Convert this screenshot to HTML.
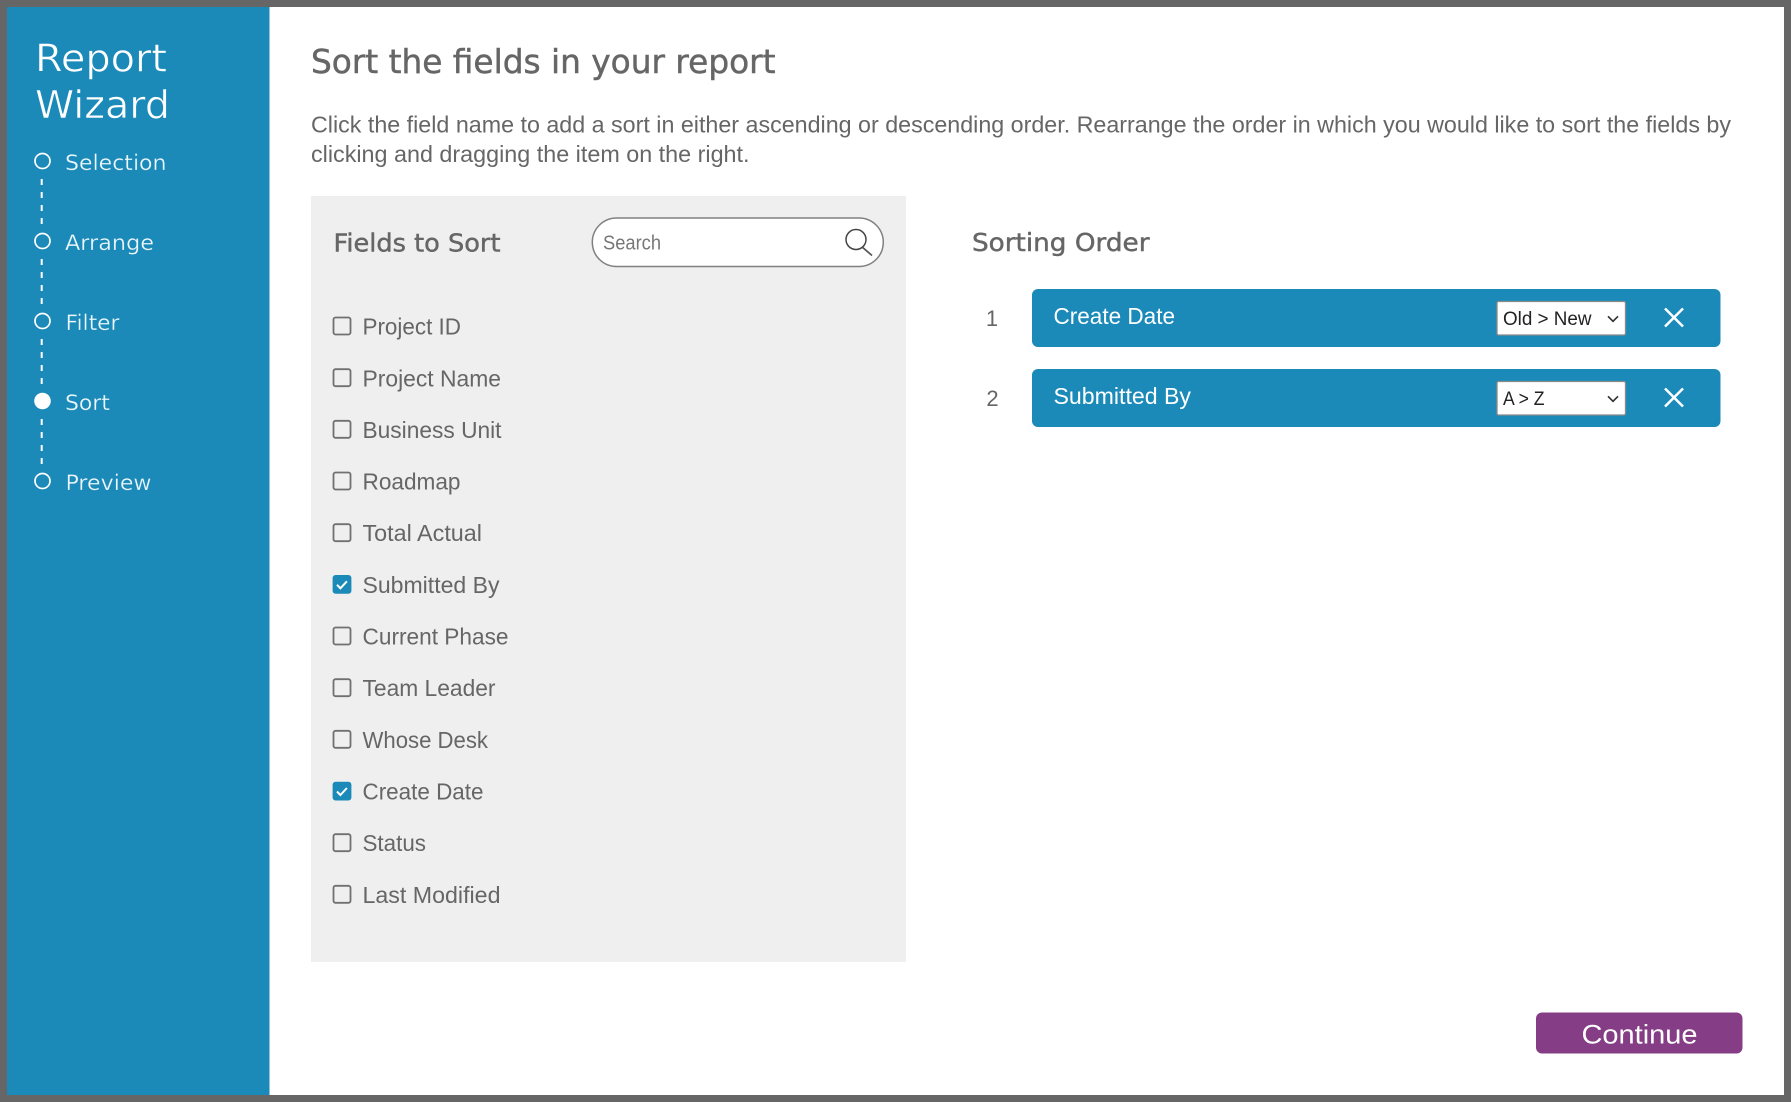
<!DOCTYPE html>
<html lang="en">
<head>
<meta charset="utf-8">
<title>Report Wizard</title>
<style>
html,body{margin:0;padding:0;background:#666;width:1791px;height:1102px;overflow:hidden}
svg{display:block;filter:blur(.35px)}
text{font-family:"Liberation Sans",sans-serif;fill:#666}
.m{font-family:"DejaVu Sans",sans-serif}
.h{stroke:#666;stroke-width:.45px}
.t{stroke:#1b8ab9;stroke-width:.6px}
.w{fill:#fff}
.nav{font-family:"DejaVu Sans",sans-serif;fill:#eef8fc;font-size:21px;stroke:#1b8ab9;stroke-width:.3px}
.f{font-size:23px}
</style>
</head>
<body>
<svg width="1791" height="1102" viewBox="0 0 1791 1102" xmlns="http://www.w3.org/2000/svg">
  <rect x="-5" y="-5" width="1801" height="1112" fill="#666"/>
  <rect x="7" y="7" width="1777" height="1088" fill="#fff"/>
  <rect x="7" y="7" width="262.500" height="1088" fill="#1b8ab9"/>

  <text class="m w t" x="35" y="71.500" font-size="38" textLength="132" lengthAdjust="spacingAndGlyphs">Report</text>
  <text class="m w t" x="35" y="118" font-size="38" textLength="135" lengthAdjust="spacingAndGlyphs">Wizard</text>

  <g fill="none" stroke="#fff" stroke-width="1.700">
    <circle cx="42.500" cy="161" r="7.500"/>
    <circle cx="42.500" cy="241" r="7.500"/>
    <circle cx="42.500" cy="321" r="7.500"/>
    <circle cx="42.500" cy="481" r="7.500"/>
  </g>
  <circle cx="42.500" cy="401" r="8.300" fill="#fff"/>
  <g stroke="#fff" stroke-width="2" stroke-dasharray="6 7">
    <line x1="41.700" y1="179" x2="41.700" y2="226"/>
    <line x1="41.700" y1="259" x2="41.700" y2="306"/>
    <line x1="41.700" y1="339" x2="41.700" y2="386"/>
    <line x1="41.700" y1="419" x2="41.700" y2="466"/>
  </g>
  <text class="nav" x="65" y="170" textLength="101.500" lengthAdjust="spacingAndGlyphs">Selection</text>
  <text class="nav" x="65" y="250" textLength="89" lengthAdjust="spacingAndGlyphs">Arrange</text>
  <text class="nav" x="65.500" y="330" textLength="54" lengthAdjust="spacingAndGlyphs">Filter</text>
  <text class="nav" x="65" y="410" textLength="45" lengthAdjust="spacingAndGlyphs">Sort</text>
  <text class="nav" x="65.500" y="490" textLength="86" lengthAdjust="spacingAndGlyphs">Preview</text>

  <text class="m h" x="311" y="73" font-size="32.500" textLength="464.500" lengthAdjust="spacingAndGlyphs">Sort the fields in your report</text>
  <text x="311" y="132.500" font-size="23" textLength="1420" lengthAdjust="spacingAndGlyphs">Click the field name to add a sort in either ascending or descending order. Rearrange the order in which you would like to sort the fields by</text>
  <text x="311" y="162" font-size="23" textLength="438.500" lengthAdjust="spacingAndGlyphs">clicking and dragging the item on the right.</text>

  <rect x="311" y="196" width="595" height="766" fill="#efefef"/>
  <text class="m h" x="333.500" y="251.500" font-size="25" textLength="167" lengthAdjust="spacingAndGlyphs">Fields to Sort</text>

  <rect x="592.300" y="218" width="291" height="48.500" rx="24.250" fill="#fff" stroke="#808080" stroke-width="1.500"/>
  <text x="603" y="249.300" font-size="20" style="fill:#777" textLength="58" lengthAdjust="spacingAndGlyphs">Search</text>
  <circle cx="856" cy="239.500" r="10" fill="none" stroke="#444" stroke-width="1.500"/>
  <line x1="862.500" y1="247.300" x2="872" y2="255.500" stroke="#555" stroke-width="1.700"/>

  <g fill="none" stroke="#707070" stroke-width="1.800">
    <rect x="333.500" y="317.500" width="17" height="17" rx="2"/>
    <rect x="333.500" y="369.200" width="17" height="17" rx="2"/>
    <rect x="333.500" y="420.800" width="17" height="17" rx="2"/>
    <rect x="333.500" y="472.500" width="17" height="17" rx="2"/>
    <rect x="333.500" y="524.200" width="17" height="17" rx="2"/>
    <rect x="333.500" y="627.500" width="17" height="17" rx="2"/>
    <rect x="333.500" y="679.200" width="17" height="17" rx="2"/>
    <rect x="333.500" y="730.800" width="17" height="17" rx="2"/>
    <rect x="333.500" y="834.200" width="17" height="17" rx="2"/>
    <rect x="333.500" y="885.800" width="17" height="17" rx="2"/>
  </g>
  <rect x="332.600" y="575" width="18.800" height="18.800" rx="3" fill="#1b8ab9"/>
  <path d="M337 584.800l3.400 3.500 6.500-7" fill="none" stroke="#fff" stroke-width="2"/>
  <rect x="332.600" y="781.700" width="18.800" height="18.800" rx="3" fill="#1b8ab9"/>
  <path d="M337 791.500l3.400 3.500 6.500-7" fill="none" stroke="#fff" stroke-width="2"/>

  <g>
    <text class="f" x="362.500" y="334.700" textLength="98.500" lengthAdjust="spacingAndGlyphs">Project ID</text>
    <text class="f" x="362.500" y="386.300" textLength="138.500" lengthAdjust="spacingAndGlyphs">Project Name</text>
    <text class="f" x="362.500" y="437.800" textLength="139" lengthAdjust="spacingAndGlyphs">Business Unit</text>
    <text class="f" x="362.500" y="489.500" textLength="98" lengthAdjust="spacingAndGlyphs">Roadmap</text>
    <text class="f" x="362.500" y="541.200" textLength="119.500" lengthAdjust="spacingAndGlyphs">Total Actual</text>
    <text class="f" x="362.500" y="592.800" textLength="137" lengthAdjust="spacingAndGlyphs">Submitted By</text>
    <text class="f" x="362.500" y="644.500" textLength="146" lengthAdjust="spacingAndGlyphs">Current Phase</text>
    <text class="f" x="362.500" y="696.200" textLength="133" lengthAdjust="spacingAndGlyphs">Team Leader</text>
    <text class="f" x="362.500" y="747.800" textLength="125.500" lengthAdjust="spacingAndGlyphs">Whose Desk</text>
    <text class="f" x="362.500" y="799.500" textLength="121" lengthAdjust="spacingAndGlyphs">Create Date</text>
    <text class="f" x="362.500" y="851.200" textLength="63.500" lengthAdjust="spacingAndGlyphs">Status</text>
    <text class="f" x="362.500" y="902.800" textLength="138" lengthAdjust="spacingAndGlyphs">Last Modified</text>
  </g>

  <text class="m h" x="972" y="251" font-size="25" textLength="177.500" lengthAdjust="spacingAndGlyphs">Sorting Order</text>

  <text x="992" y="326" font-size="22" text-anchor="middle">1</text>
  <text x="992.500" y="406" font-size="22" text-anchor="middle">2</text>

  <rect x="1032" y="289" width="688.500" height="58" rx="6" fill="#1b8ab9"/>
  <rect x="1032" y="369" width="688.500" height="58" rx="6" fill="#1b8ab9"/>
  <text class="w f" x="1053.500" y="324" textLength="121.500" lengthAdjust="spacingAndGlyphs">Create Date</text>
  <text class="w f" x="1053.500" y="404" textLength="137.500" lengthAdjust="spacingAndGlyphs">Submitted By</text>

  <rect x="1497" y="301.500" width="128.500" height="33.500" rx="1.500" fill="#fff" stroke="#8a8a8a" stroke-width="1.300"/>
  <rect x="1497" y="381.500" width="128.500" height="33.500" rx="1.500" fill="#fff" stroke="#8a8a8a" stroke-width="1.300"/>
  <text x="1503" y="325" font-size="19" style="fill:#222" textLength="88.500" lengthAdjust="spacingAndGlyphs">Old &gt; New</text>
  <text x="1503" y="405" font-size="19" style="fill:#222" textLength="41.500" lengthAdjust="spacingAndGlyphs">A &gt; Z</text>
  <path d="M1608 316.300l5 5 5-5M1608 396.300l5 5 5-5" fill="none" stroke="#333" stroke-width="1.700"/>
  <path d="M1665 308.500l18 18M1683 308.500l-18 18M1665 388.500l18 18M1683 388.500l-18 18" fill="none" stroke="#fff" stroke-width="2.500"/>

  <rect x="1536" y="1012.500" width="206.500" height="41" rx="6" fill="#853d85"/>
  <text class="w" x="1581.500" y="1043.300" font-size="27" textLength="116" lengthAdjust="spacingAndGlyphs">Continue</text>
</svg>
</body>
</html>
